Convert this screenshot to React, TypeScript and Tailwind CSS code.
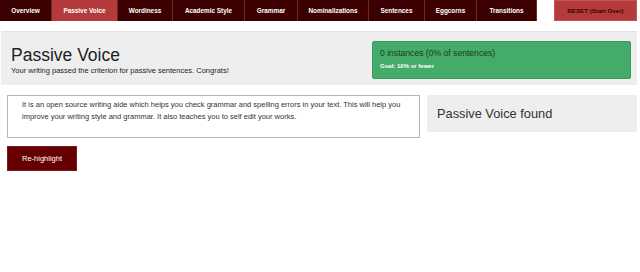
import React from 'react';

const TABS: { label: string; width: string; active?: boolean }[] = [
  { label: 'Overview', width: 'w-[52px]' },
  { label: 'Passive Voice', width: 'w-[66px]', active: true },
  { label: 'Wordiness', width: 'w-[55px]' },
  { label: 'Academic Style', width: 'w-[72px]' },
  { label: 'Grammar', width: 'w-[53px]' },
  { label: 'Nominalizations', width: 'w-[71px]' },
  { label: 'Sentences', width: 'w-[56px]' },
  { label: 'Eggcorns', width: 'w-[52px]' },
  { label: 'Transitions', width: 'w-[60px]' },
];

export default function App() {
  return (
    <div className="w-[640px] h-[272px] bg-white font-[Liberation_Sans,Arial,sans-serif] text-[#333]">
      {/* Top nav */}
      <div className="flex h-[21px]">
        <div className="flex bg-[#3d0000]">
          {TABS.map((t) => (
            <div
              key={t.label}
              className={`${t.width} flex items-center justify-center border-r border-[#6a2a2a] text-[6.4px] font-bold text-white ${
                t.active ? 'bg-[#b33b3b]' : ''
              }`}
            >
              {t.label}
            </div>
          ))}
        </div>
        <div className="ml-[17px] w-[83px] flex items-center justify-center bg-[#b33b3b] border border-[#c85555] text-[6.2px] font-bold text-[#3d0000]">
          RESET (Start Over)
        </div>
      </div>

      {/* Header panel */}
      <div className="mt-[10px] ml-px mr-[3px] h-[54px] bg-[#eeeeee] border-t border-[#e2e2e2] flex items-start">
        <div className="pl-[10px] pt-[12px] flex-1">
          <h1 className="text-[17.5px] leading-[22px] text-[#222]">Passive Voice</h1>
          <p className="text-[7.5px] leading-[10px] text-[#222]">
            Your writing passed the criterion for passive sentences. Congrats!
          </p>
        </div>
        <div className="mt-[9px] mr-[6px] w-[259px] h-[38px] bg-[#45ab6b] border border-[#3c9a5e] rounded-[2px] pl-[7px] pt-[5px]">
          <div className="text-[8.6px] leading-[13px] text-[#173b22]">0 instances (0% of sentences)</div>
          <div className="mt-[2px] text-[6px] leading-[9px] font-bold text-white">Goal: 10% or fewer</div>
        </div>
      </div>

      {/* Content row */}
      <div className="mt-[10px] flex items-start">
        <div className="ml-[7px] w-[413px] h-[43px] border border-[#b5b5b5] pl-[14px] pr-[10px] pt-[3px] text-[7.5px] leading-[12px] text-[#333]">
          It is an open source writing aide which helps you check grammar and spelling errors in your text. This will help you
          improve your writing style and grammar. It also teaches you to self edit your works.
        </div>
        <div className="ml-[7px] w-[210px] h-[37px] bg-[#eeeeee] flex items-center pl-[10px] text-[12.8px] text-[#333]">
          Passive Voice found
        </div>
      </div>

      <button className="mt-[8px] ml-[7px] w-[70px] h-[25px] bg-[#660000] border border-[#7a1a1a] text-[7.5px] text-white text-left pl-[14px]">
        Re-highlight
      </button>
    </div>
  );
}
